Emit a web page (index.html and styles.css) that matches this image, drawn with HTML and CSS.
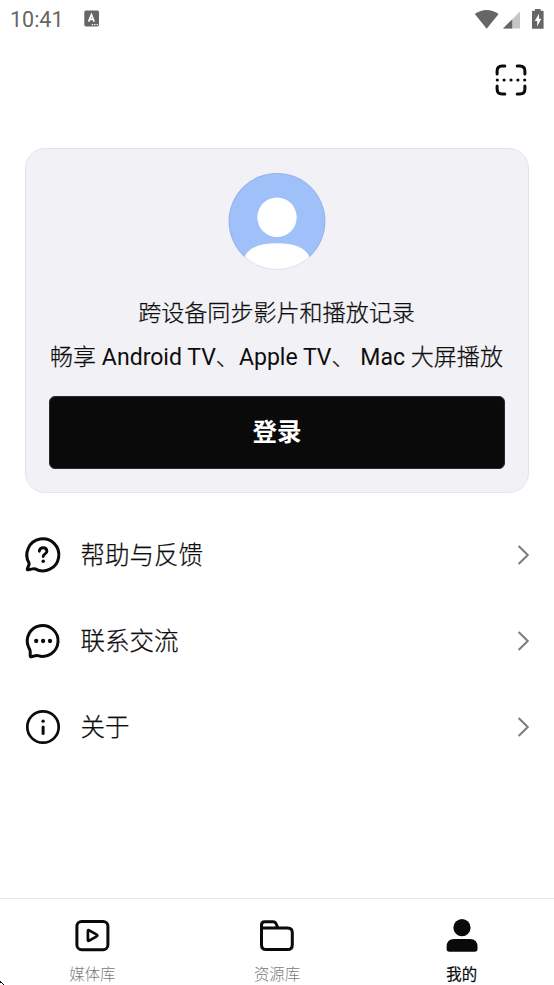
FILE: index.html
```html
<!DOCTYPE html>
<html lang="zh-CN">
<head>
<meta charset="utf-8">
<title>我的</title>
<link rel="stylesheet" href="styles.css">
</head>
<body>
<div class="app">
  <header class="status">
    <span class="time">10:41</span>
    <svg class="keyboard" width="16" height="18" viewBox="84 10 16 18"><rect x="84.3" y="10.4" width="14.7" height="16" rx="1.6" fill="#666"/><path d="M88.6 21.6 91.4 14.7 94.2 21.6M89.6 19.4h3.7" fill="none" stroke="#fff" stroke-width="1.7"/><path d="M91.8 24.7h1.3m1.1 0h1.3m1.1 0h1.3" stroke="#fff" stroke-width="1.2"/></svg>
    <svg class="signals" width="72" height="22" viewBox="474 7 72 22"><path d="M474.8 13Q486.7 5 498.6 13L486.7 27.7Z" fill="#666"/><path d="M520 10.6V27.6H503Z" fill="#c6c6c6"/><path d="M512.2 18.4V27.6H503Z" fill="#666"/><path d="M535 8h5.6v1.8h2.4q.6 0 .6.6v16.8q0 .6-.6.6h-10.4q-.6 0-.6-.6V10.400q0-.6.6-.6H535Z" fill="#666"/><path d="M539 12.700 534.700 19.900h2.500v5.500l4-7.600h-2.200Z" fill="#fff"/></svg>
  </header>
  <div class="toolbar">
    <svg width="36" height="36" viewBox="493 62 36 36" fill="none" stroke="#0a0a0a" stroke-width="3" stroke-linecap="round"><path d="M497.100 74v-3q0-5 5-5h2.700M517.200 66h2.700q5 0 5 5v3M524.900 86v3q0 5-5 5h-2.700M504.800 94h-2.700q-5 0-5-5v-3"/><path d="M497.300 80h.01M504.100 80h.01M511 80h.01M517.900 80h.01M524.700 80h.01" stroke-width="3.200"/></svg>
  </div>
  <main>
    <section class="card">
      <svg class="avatar" width="98" height="98" viewBox="228 171.700 98 98"><defs><clipPath id="round"><circle cx="277" cy="221" r="48.400"/></clipPath></defs><g clip-path="url(#round)"><path d="M228 172h98v98h-98Z" fill="#a0c0fa"/><ellipse cx="277" cy="217" rx="19.700" ry="19.800" fill="#fff"/><path d="M244 258Q249 243 277 243T310 258V272H244Z" fill="#fff"/></g><circle cx="277" cy="221" r="48" fill="none" stroke="#000" stroke-opacity=".07"/></svg>
      <p>跨设备同步影片和播放记录</p>
      <p class="devices">畅享<span class="latin"> Android TV</span>、<span class="latin">Apple TV</span>、<span class="latin"> Mac </span>大屏播放</p>
      <button class="login">登录</button>
    </section>
    <nav class="menu">
      <a class="row">
        <svg width="40" height="40" viewBox="23 535 40 40" fill="none" stroke="#0a0a0a" stroke-width="3" stroke-linecap="round" stroke-linejoin="round"><path d="M28.900 562.700A16 16 0 1 1 35.200 568.900Q34.300 568.400 32.500 568.900L28.200 569.800Q26.900 570 27.400 568.600L28.900 564.900Q29.400 563.700 28.900 562.700Z"/><path d="M39.300 551.200Q39.700 547.800 43.200 547.800T46.900 551.300C46.900 554 43.300 553.700 43.200 556.500" stroke-width="2.900"/><path d="M43.200 561.200h.01" stroke-width="3.500"/></svg>
        <span>帮助与反馈</span>
        <svg class="chevron" width="16" height="24" viewBox="515 543 16 24"><path d="m518.600 546 9.200 9-9.200 9"/></svg>
      </a>
      <a class="row">
        <svg width="40" height="40" viewBox="23 621 40 40" fill="none" stroke="#0a0a0a" stroke-width="3" stroke-linecap="round" stroke-linejoin="round"><path d="M28.500 647A15.400 15.400 0 1 1 38 655.600Q36.800 655.300 35.200 655.800L31.200 656.700Q30.300 656.900 30.200 655.800V651.500Q30.200 650.200 29.400 648.900Z"/><path d="M36.200 641h.01M43.100 641h.01M50 641h.01" stroke-width="4.300"/></svg>
        <span>联系交流</span>
        <svg class="chevron" width="16" height="24" viewBox="515 543 16 24"><path d="m518.600 546 9.200 9-9.200 9"/></svg>
      </a>
      <a class="row">
        <svg width="40" height="40" viewBox="23 707 40 40" fill="none" stroke="#0a0a0a" stroke-linecap="round"><circle cx="43" cy="727" r="15.700" stroke-width="2.700"/><path d="M43.100 727.100v6.300" stroke-width="3"/><path d="M43.100 721.200h.01" stroke-width="3.300"/></svg>
        <span>关于</span>
        <svg class="chevron" width="16" height="24" viewBox="515 543 16 24"><path d="m518.600 546 9.200 9-9.200 9"/></svg>
      </a>
    </nav>
  </main>
  <footer class="tabs">
    <a class="tab">
      <svg width="40" height="40" viewBox="72 916 40 40" fill="none" stroke="#0a0a0a" stroke-linejoin="round"><rect x="76.900" y="921.500" width="31" height="28.200" rx="4.800" stroke-width="3"/><path d="M87.900 931.200Q87.900 929.700 89.200 930.400L96.700 934.700Q98 935.500 96.700 936.300L89.200 940.600Q87.900 941.300 87.900 939.800Z" stroke-width="2.700"/></svg>
      <span>媒体库</span>
    </a>
    <a class="tab">
      <svg width="40" height="40" viewBox="257 916 40 40" fill="none" stroke="#0a0a0a" stroke-width="3" stroke-linejoin="round"><path d="M261.500 928V925Q261.500 921.800 264.700 921.800H273Q275.200 921.800 276.200 924L278 928H287.500Q292.300 928 292.300 932.800V945Q292.300 949.600 287.500 949.600H266.300Q261.500 949.600 261.500 945ZM261.500 928H278"/></svg>
      <span>资源库</span>
    </a>
    <a class="tab active">
      <svg width="40" height="40" viewBox="441.500 916 40 40" fill="#0a0a0a"><circle cx="461.500" cy="927.700" r="8.600"/><path d="M453.500 939H469.500Q477 939 477 947V949Q477 951.800 474.200 951.800H448.900Q446.100 951.800 446.100 949V947Q446.100 939 453.500 939Z"/></svg>
      <span>我的</span>
    </a>
    <svg class="pointer" width="5" height="5" viewBox="0 0 5 5" shape-rendering="crispEdges" aria-hidden="true"><path d="M0 1h1v1H0zM1 2h1v1H1zM2 3h1v1H2zM3 4h1v1H3zM0 2h1v1H0z"/></svg>
  </footer>
</div>
</body>
</html>
```
FILE: styles.css
```css
* { box-sizing: border-box; }
body {
  margin: 0;
  background: #fff;
  color: #0d0d0d;
  font-family: Roboto, "Noto Sans CJK SC", sans-serif;
}
svg { display: block; flex: none; }
p { margin: 0; }
.app {
  height: 985px;
  display: flex;
  flex-direction: column;
  overflow: hidden;
}
.status {
  height: 38px;
  padding: 0 8px 0 10px;
  display: flex;
  align-items: center;
  color: #666;
}
.time { width: 74px; font-size: 21.5px; line-height: 38px; padding-top: 1px; }
.signals { margin-left: auto; }
.toolbar {
  height: 110px;
  padding: 24px 25px 0 0;
  display: flex;
  justify-content: flex-end;
  align-items: flex-start;
}
main { flex: 1; padding: 0 25px; }
.card {
  height: 345px;
  padding: 23px 23px 0;
  border: 1px solid #e5e5e9;
  border-radius: 20px;
  background: #f2f1f6;
  display: flex;
  flex-direction: column;
  align-items: center;
  font-size: 23.05px;
  line-height: 44px;
  white-space: nowrap;
}
.card p {
  padding-right: 1px;
  font-weight: 300;
  -webkit-text-stroke: 0.25px #0d0d0d;
}
.card .latin { font-weight: 400; -webkit-text-stroke: 0; }
.avatar { margin-bottom: 22px; }
.login {
  width: 456px;
  height: 73px;
  margin-top: 16px;
  padding: 0 0 5px;
  flex: none;
  border: 1px solid #292929;
  border-radius: 6px;
  background: #0a0a0a;
  color: #fff;
  font: bold 24.5px Roboto, "Noto Sans CJK SC", sans-serif;
}
.menu { padding-top: 19px; }
.row {
  height: 86px;
  margin-left: -2px;
  margin-right: -2px;
  display: flex;
  align-items: center;
  gap: 17.5px;
  font-size: 24.5px;
  font-weight: 300;
}
.row span { padding-bottom: 4px; -webkit-text-stroke: 0.25px #0d0d0d; }
.chevron { margin-left: auto; fill: none; stroke: #7c7c7c; stroke-width: 2; }
.tabs {
  position: relative;
  height: 87px;
  border-top: 1px solid #e8e8e8;
  display: grid;
  grid-template-columns: repeat(3, 1fr);
}
.tab {
  padding-top: 17px;
  display: flex;
  flex-direction: column;
  align-items: center;
  color: #7a7a7a;
  font-size: 15.4px;
  font-weight: 300;
  line-height: 22px;
}
.tab span { margin-top: 8px; }
.tab.active { color: #0a0a0a; font-weight: 400; -webkit-text-stroke: 0.2px #0a0a0a; }
.pointer { position: absolute; left: 0; bottom: 0; }
```
